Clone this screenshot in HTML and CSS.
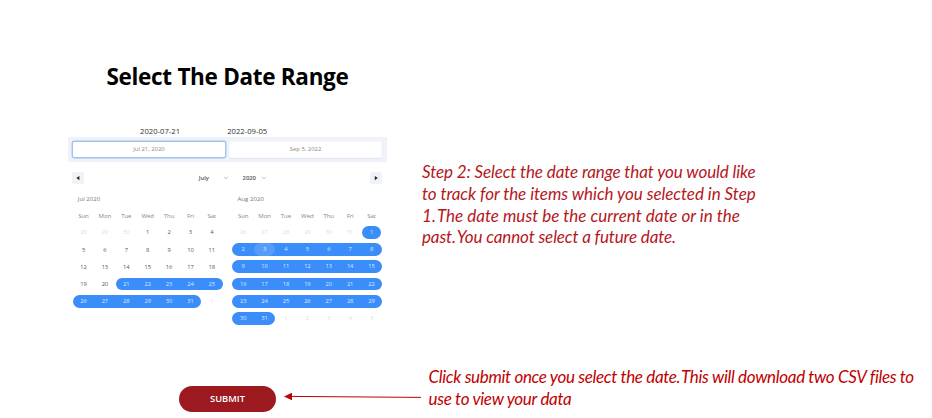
FILE: index.html
```html
<!DOCTYPE html>
<html lang="en">
<head>
<meta charset="utf-8">
<title>Select The Date Range</title>
<link rel="stylesheet" href="styles.css">
</head>
<body>
<main class="page">
  <section class="picker">
    <h1>Select The Date Range</h1>
    <div class="chosen"><span>2020-07-21</span><span>2022-09-05</span></div>
    <div class="inputs"><div class="field active">Jul 21, 2020</div><div class="field">Sep 5, 2022</div></div>
    <div class="nav">
      <button class="step" aria-label="Previous month"><svg width="12" height="12" viewBox="0 0 12 12"><path d="M7.4 4v4.2L4.4 6.1z"/></svg></button>
      <div class="select month-select">July<svg width="6" height="4" viewBox="0 0 6 4"><path d="M1 .8l2 2 2-2"/></svg></div>
      <div class="select year-select">2020<svg width="6" height="4" viewBox="0 0 6 4"><path d="M1 .8l2 2 2-2"/></svg></div>
      <button class="step" aria-label="Next month"><svg width="12" height="12" viewBox="0 0 12 12"><path d="M4.8 4v4.2l3-2.1z"/></svg></button>
    </div>
    <div class="months">
      <div class="month">
        <div class="name">Jul 2020</div>
        <div class="week heads"><span>Sun</span><span>Mon</span><span>Tue</span><span>Wed</span><span>Thu</span><span>Fri</span><span>Sat</span></div>
        <div class="week"><span class="out">28</span><span class="out">29</span><span class="out">30</span><span>1</span><span>2</span><span>3</span><span>4</span></div>
        <div class="week"><span>5</span><span>6</span><span>7</span><span>8</span><span>9</span><span>10</span><span>11</span></div>
        <div class="week"><span>12</span><span>13</span><span>14</span><span>15</span><span>16</span><span>17</span><span>18</span></div>
        <div class="week"><span>19</span><span>20</span><div class="range five"><span>21</span><span>22</span><span>23</span><span>24</span><span>25</span></div></div>
        <div class="week"><div class="range six"><span>26</span><span>27</span><span>28</span><span>29</span><span>30</span><span>31</span></div><span class="out">1</span></div>
      </div>
      <div class="month">
        <div class="name">Aug 2020</div>
        <div class="week heads"><span>Sun</span><span>Mon</span><span>Tue</span><span>Wed</span><span>Thu</span><span>Fri</span><span>Sat</span></div>
        <div class="week"><span class="out">26</span><span class="out">27</span><span class="out">28</span><span class="out">29</span><span class="out">30</span><span class="out">31</span><div class="range one"><span>1</span></div></div>
        <div class="week"><div class="range seven"><span>2</span><span class="hover">3</span><span>4</span><span>5</span><span>6</span><span>7</span><span>8</span></div></div>
        <div class="week"><div class="range seven"><span>9</span><span>10</span><span>11</span><span>12</span><span>13</span><span>14</span><span>15</span></div></div>
        <div class="week"><div class="range seven"><span>16</span><span>17</span><span>18</span><span>19</span><span>20</span><span>21</span><span>22</span></div></div>
        <div class="week"><div class="range seven"><span>23</span><span>24</span><span>25</span><span>26</span><span>27</span><span>28</span><span>29</span></div></div>
        <div class="week"><div class="range two"><span>30</span><span>31</span></div><span class="out">1</span><span class="out">2</span><span class="out">3</span><span class="out">4</span><span class="out">5</span></div>
      </div>
    </div>
  </section>
  <p class="note step-note"><span class="l1">Step 2: Select the date range that you would like</span><span class="l2">to track for the items which you selected in Step</span><span class="l3">1.<i> </i>The date must be the current date or in the</span><span class="l4">past.<i> </i>You cannot select a future date.</span></p>
  <footer class="submit-row">
    <button class="submit">SUBMIT</button>
    <svg class="arrow" width="138" height="10" viewBox="0 0 138 10"><path class="line" d="M6 4.4L137 5.4"/><path class="head" d="M0 4.4L8 .8v7.4z"/></svg>
    <p class="note submit-note"><span class="l5">Click submit once you select the date.<i> </i>This will download two CSV files to</span><span class="l6">use to view your data</span></p>
  </footer>
</main>
</body>
</html>
```
FILE: styles.css
```css
* { box-sizing: border-box; }
body { margin: 0; background: #fff; font-family: "Open Sans", "Noto Sans", sans-serif; }
.page {
  width: 932px;
  height: 418px;
  overflow: hidden;
  display: grid;
  grid-template-columns: 319px 1fr;
  grid-template-rows: 366px 52px;
  column-gap: 35px;
  padding-left: 68px;
}
h1 {
  margin: 61px 0 0;
  height: 32px;
  font: 700 22.5px/32px "Open Sans", sans-serif;
  letter-spacing: -0.3px;
  text-align: center;
  color: #000;
  white-space: nowrap;
}
.chosen {
  display: flex;
  gap: 47px;
  height: 12px;
  margin: 32px 0 0 72px;
  font-size: 7.7px;
  line-height: 12px;
  color: #333;
}
.inputs {
  display: grid;
  grid-template-columns: 154px 153px;
  column-gap: 3px;
  height: 25px;
  padding: 4px;
  background: #eff2f9;
}
.field {
  height: 17px;
  border: 1px solid #f8f9fd;
  border-radius: 2px;
  background: #fff;
  box-shadow: 0 1px 1px #e0e6f0;
  font-size: 5.9px;
  line-height: 15px;
  text-align: center;
  color: #888;
}
.field.active { border-color: #a3c1ec; box-shadow: 0 0 0 .4px #a3c1ec; }
.nav {
  display: grid;
  grid-template-columns: 12px 145px 38px 115px;
  align-items: center;
  height: 32px;
  padding-left: 4px;
}
.step {
  width: 12px;
  height: 12px;
  padding: 0;
  border: 0;
  border-radius: 2px;
  background: #eff2f7;
}
.step:last-child { justify-self: end; }
.step svg { display: block; fill: #222; }
.select {
  display: flex;
  align-items: center;
  font-size: 5.9px;
  font-weight: 600;
  color: #555;
}
.month-select { justify-content: flex-end; gap: 14px; }
.year-select { justify-content: flex-end; gap: 5px; }
.select svg { fill: none; stroke: #aaa; stroke-width: .8; }
.months {
  display: grid;
  grid-template-columns: 149.8px 149.8px;
  column-gap: 9.9px;
  padding-left: 4.8px;
}
.name { height: 14.9px; padding-left: 5px; font-size: 6.1px; line-height: 9px; color: #777; }
.week {
  display: grid;
  grid-template-columns: repeat(7, 21.4px);
  align-items: center;
  height: 17.2px;
  font-size: 5.8px;
  line-height: 12px;
  text-align: center;
  letter-spacing: -0.1px;
  color: #555;
}
.heads { height: 15px; font-size: 6.1px; color: #888; }
.out { color: #ddd; }
.range {
  display: grid;
  grid-auto-flow: column;
  grid-auto-columns: 21.4px;
  height: 12.8px;
  border-radius: 7px;
  background: #3b8dfa;
  color: #d8e8ff;
}
.one { grid-column: span 1; width: 19.5px; justify-self: center; justify-content: center; }
.two { grid-column: span 2; }
.five { grid-column: span 5; }
.six { grid-column: span 6; }
.seven { grid-column: span 7; }
.hover { border-radius: 7px; background: #569dfb; }
.note {
  margin: 0;
  font: italic 400 17px/21.8px Lato, sans-serif;
  color: #b5171c;
  white-space: nowrap;
}
.note span { display: block; width: max-content; }
.note i { margin-right: -3px; }
.step-note { padding-top: 161px; }
.l1 { letter-spacing: -0.1px; }
.l2 { letter-spacing: -0.04px; }
.l3 { letter-spacing: 0.02px; }
.l4 { letter-spacing: -0.12px; }
.l5 { letter-spacing: -0.33px; }
.l6 { letter-spacing: -0.3px; }
.submit-row {
  grid-column: 1 / -1;
  display: flex;
  align-items: flex-start;
  padding-left: 111px;
}
.submit {
  flex: none;
  width: 97px;
  height: 26px;
  margin-top: 20px;
  padding: 0;
  border: 0;
  border-radius: 13px;
  background: #9c1a1f;
  color: #fff;
  font: 600 9.3px/26px "Open Sans", sans-serif;
}
.arrow { flex: none; margin: 26px 6.5px 0 8px; }
.arrow .line { fill: none; stroke: #c00000; stroke-width: 1; }
.arrow .head { fill: #c00000; }
.submit-note { line-height: 21.5px; color: #c00000; }
```
